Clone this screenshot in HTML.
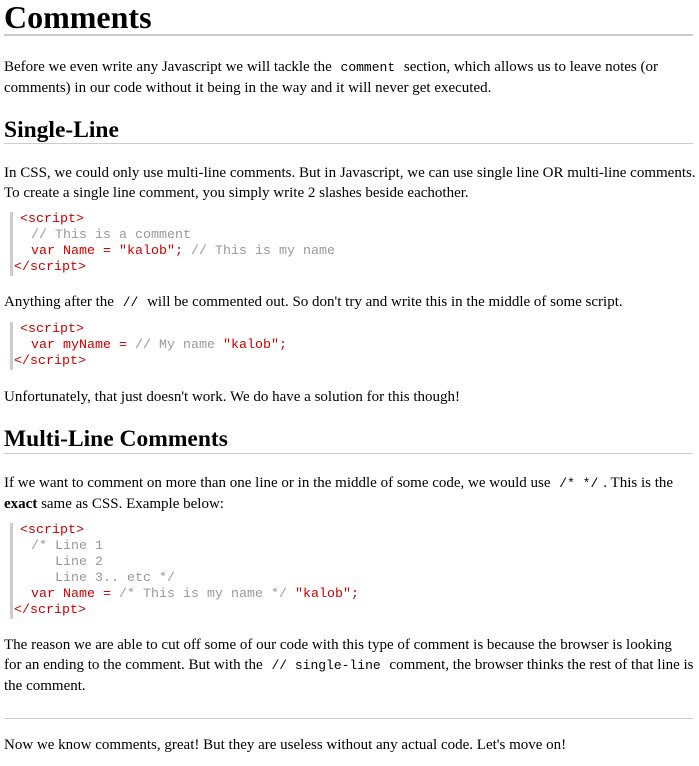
<!DOCTYPE html>
<html><head><meta charset="utf-8"><style>
body{margin:0;background:#fff;width:699px;height:766px;position:relative;font-family:"Liberation Serif",serif;font-size:15px;color:#000;overflow:hidden}
.a{position:absolute;left:4px;white-space:nowrap;line-height:20px}
h1,h2{margin:0;font-weight:bold;position:absolute;left:4px;white-space:nowrap}
h1{font-size:32px;top:-1px;line-height:36px}
h2{font-size:23.5px;line-height:26px}
.rule{position:absolute;left:4px;width:689px;height:1px;background:#ccc}
.code{position:absolute;left:10px;border-left:3px solid #ccc;font-family:"Liberation Mono",monospace;font-size:13.33px;line-height:16px;color:#c00;white-space:pre}
.code div{position:relative}
.c{color:#999}
code{font-family:"Liberation Mono",monospace;font-size:13px;padding:0 5px}
</style></head><body>
<h1>Comments</h1>
<div class="rule" style="top:34px;height:2px"></div>
<div class="a" style="top:57px">Before we even write any Javascript we will tackle the <code>comment</code> section, which allows us to leave notes (or<br>comments) in our code without it being in the way and it will never get executed.</div>
<h2 style="top:117px">Single-Line</h2>
<div class="rule" style="top:143px"></div>
<div class="a" style="top:163px">In CSS, we could only use multi-line comments. But in Javascript, we can use single line OR multi-line comments.<br>To create a single line comment, you simply write 2 slashes beside eachother.</div>
<div class="code" style="top:212px;height:64px"><div style="left:7px">&lt;script&gt;</div><div class="c" style="left:18px">// This is a comment</div><div style="left:18px">var Name = "kalob"; <span class="c">// This is my name</span></div><div style="left:1px">&lt;/script&gt;</div></div>
<div class="a" style="top:292px">Anything after the <code>//</code> will be commented out. So don't try and write this in the middle of some script.</div>
<div class="code" style="top:322px;height:48px"><div style="left:7px">&lt;script&gt;</div><div style="left:18px">var myName = <span class="c">// My name</span> "kalob";</div><div style="left:1px">&lt;/script&gt;</div></div>
<div class="a" style="top:387px">Unfortunately, that just doesn't work. We do have a solution for this though!</div>
<h2 style="top:426px">Multi-Line Comments</h2>
<div class="rule" style="top:453px"></div>
<div class="a" style="top:473px">If we want to comment on more than one line or in the middle of some code, we would use <code>/* */</code>. This is the<br><b>exact</b> same as CSS. Example below:</div>
<div class="code" style="top:523px;height:96px"><div style="left:7px">&lt;script&gt;</div><div class="c" style="left:18px">/* Line 1</div><div class="c" style="left:18px">   Line 2</div><div class="c" style="left:18px">   Line 3.. etc */</div><div style="left:18px">var Name = <span class="c">/* This is my name */</span> "kalob";</div><div style="left:1px">&lt;/script&gt;</div></div>
<div class="a" style="top:635px">The reason we are able to cut off some of our code with this type of comment is because the browser is looking<br>for an ending to the comment. But with the <code>// single-line</code> comment, the browser thinks the rest of that line is<br>the comment.</div>
<div class="rule" style="top:718px"></div>
<div class="a" style="top:735px">Now we know comments, great! But they are useless without any actual code. Let's move on!</div>
</body></html>
